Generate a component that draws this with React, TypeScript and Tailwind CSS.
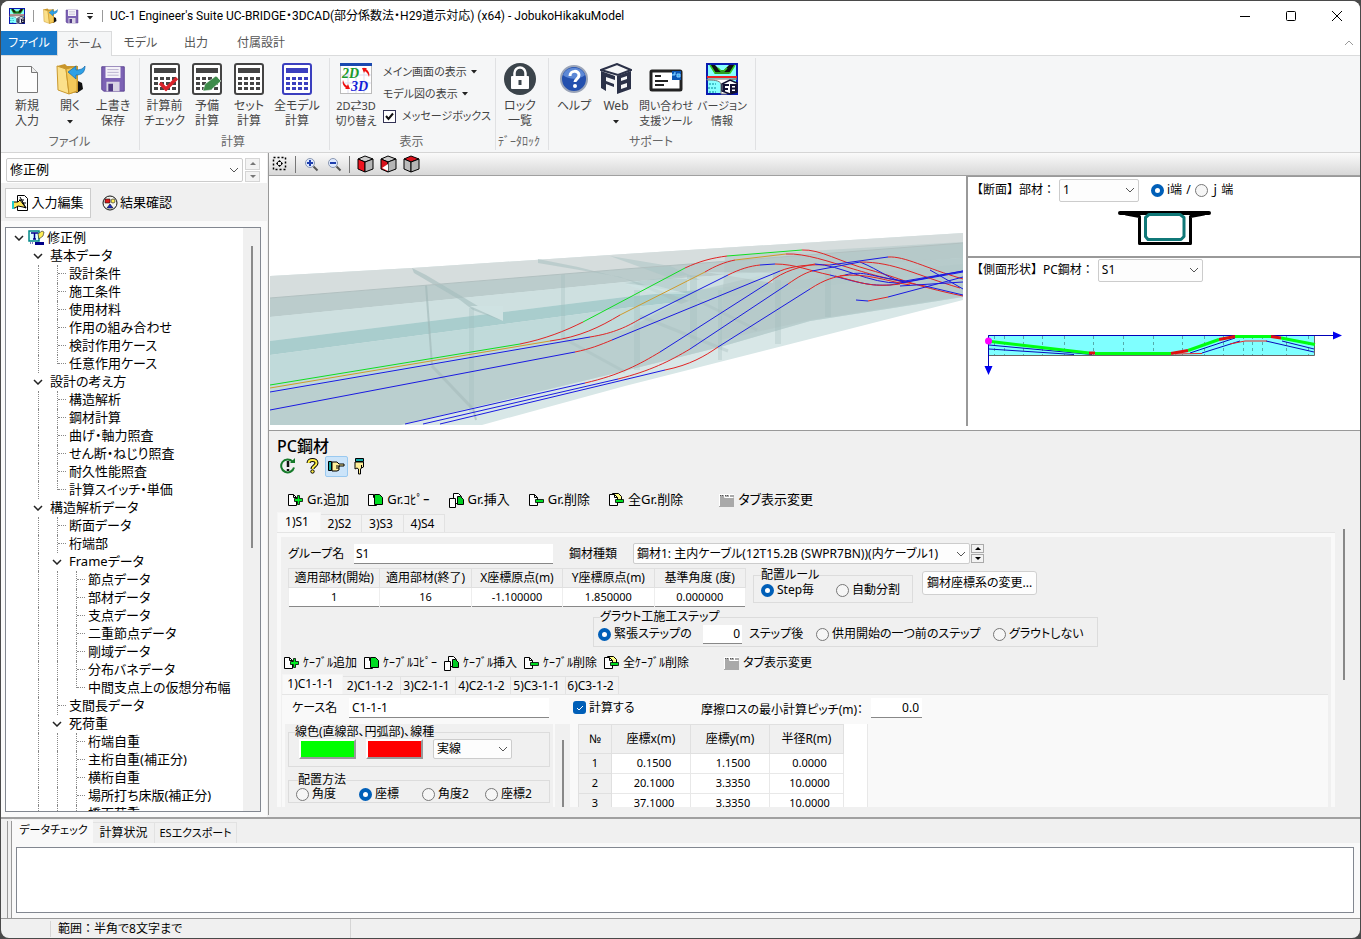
import React from 'react';
import clsx from 'clsx';

type Node = { label: string; depth: number; open?: boolean; last?: boolean };

const tree: Node[] = [
  { label: '基本データ', depth: 1, open: true },
  { label: '設計条件', depth: 2 },
  { label: '施工条件', depth: 2 },
  { label: '使用材料', depth: 2 },
  { label: '作用の組み合わせ', depth: 2 },
  { label: '検討作用ケース', depth: 2 },
  { label: '任意作用ケース', depth: 2, last: true },
  { label: '設計の考え方', depth: 1, open: true },
  { label: '構造解析', depth: 2 },
  { label: '鋼材計算', depth: 2 },
  { label: '曲げ・軸力照査', depth: 2 },
  { label: 'せん断・ねじり照査', depth: 2 },
  { label: '耐久性能照査', depth: 2 },
  { label: '計算スイッチ・単価', depth: 2, last: true },
  { label: '構造解析データ', depth: 1, open: true },
  { label: '断面データ', depth: 2 },
  { label: '桁端部', depth: 2 },
  { label: 'Frameデータ', depth: 2, open: true },
  { label: '節点データ', depth: 3 },
  { label: '部材データ', depth: 3 },
  { label: '支点データ', depth: 3 },
  { label: '二重節点データ', depth: 3 },
  { label: '剛域データ', depth: 3 },
  { label: '分布バネデータ', depth: 3 },
  { label: '中間支点上の仮想分布幅', depth: 3, last: true },
  { label: '支間長データ', depth: 2 },
  { label: '死荷重', depth: 2, open: true },
  { label: '桁端自重', depth: 3 },
  { label: '主桁自重(補正分)', depth: 3 },
  { label: '横桁自重', depth: 3 },
  { label: '場所打ち床版(補正分)', depth: 3 },
  { label: '橋面荷重', depth: 3 },
];

const Chevron = ({ className }: { className?: string }) => (
  <svg width="10" height="6" viewBox="0 0 10 6" fill="none" stroke="currentColor" className={className}>
    <path d="M1 1l4 4 4-4" />
  </svg>
);

const Caret = () => (
  <svg width="6" height="4" viewBox="0 0 6 4" className="inline-block">
    <path d="M0 0h6L3 3.5z" fill="#222" />
  </svg>
);

/* ---------- icons ---------- */

const AppIcon = ({ size }: { size: number }) => (
  <svg width={size} height={size} viewBox="0 0 32 32">
    <rect x="1" y="1" width="30" height="30" fill="#8ff" stroke="#0a1ab0" strokeWidth="2" />
    <path d="M4 2h5l5 5h4l5-5h6l-6 9H9z" fill="#111" />
    <path d="M4 2l5 8h15l5-8M12 5l3 3h3l3-3" fill="none" stroke="#3c2" strokeWidth="1.500" />
    <path d="M1 14h30" stroke="#e22" strokeWidth="2" />
    <path d="M1 16h30c-5 0-9 1-10 5v10h-6V21c-1-4-9-4-14-4z" fill="#fff" stroke="#777" />
    <path d="M3 21h7M2 25h8M3 29h7" stroke="#089" strokeDasharray="2 1" />
    <path d="M16 21l8-4 7 3v9l-7 2-8-3z" fill="#fff" stroke="#113" strokeWidth="1.500" />
    <path d="M18 29v-7h5M18 26h4M25 22h5v7h-5zM25 25.500h5" stroke="#113" strokeWidth="2" fill="none" />
  </svg>
);

const FolderIcon = ({ size }: { size: number }) => (
  <svg width={size} height={size} viewBox="0 0 32 32">
    <path d="M20 16l8 4 1 6-6 4-4-2z" fill="#111" />
    <path d="M3 3l8-2 2 2h11v26l-9 2z" fill="#c9962c" />
    <path d="M3 3l9 3 3 25-11-4z" fill="#fbe08a" stroke="#c9982e" />
    <path d="M12 6l11-3v25l-8 3z" fill="#f3c95a" stroke="#c9982e" />
    <path d="M31 3c0 7-4 9-9 9v4l-8-7 8-6v4c4 0 7-1 9-4z" fill="#2da0e6" stroke="#1668a8" strokeWidth=".7" />
  </svg>
);

const SaveIcon = ({ size }: { size: number }) => (
  <svg width={size} height={size} viewBox="0 0 32 32">
    <path d="M4 4h24v26H6l-2-2z" fill="#7c62b4" stroke="#5c4391" />
    <path d="M8 4h16v12H8z" fill="#f4f2f8" />
    <path d="M10 7h12M10 10h12M10 13h12" stroke="#b9b0ce" />
    <path d="M9 20h14v10H9z" fill="#d9d4e4" />
    <path d="M11 22h5v8h-5z" fill="#513b85" />
  </svg>
);

const NewIcon = () => (
  <svg width="32" height="32" viewBox="0 0 32 32">
    <path d="M6.500 3.500h14l6 6v20h-20z" fill="#fdfdfd" stroke="#777" />
    <path d="M20.500 3.500v6h6" fill="#eee" stroke="#777" />
  </svg>
);

const CalcIcon = ({ color, mark }: { color: string; mark?: 'check' | 'pen' }) => (
  <svg width="32" height="32" viewBox="0 0 32 32">
    <rect x="2" y="1" width="28" height="30" rx="2" fill="#fff" stroke={color} strokeWidth="2" />
    <path d="M5 5h22v5H5z" fill={color} />
    {[13, 18, 23].map((y) =>
      [5, 11, 17, 23].map((x) => <rect key={`${x}-${y}`} x={x} y={y + 1} width="4" height="3" fill={color} />),
    )}
    {mark === 'check' && <path d="M11 20l6 6 11-11" fill="none" stroke="#d9222a" strokeWidth="3.500" />}
    {mark === 'pen' && <path d="M12 28l2-7 11-8 5 5-10 9z" fill="#3d8b4a" stroke="#fff" strokeWidth=".5" />}
  </svg>
);

const SwitchIcon = () => (
  <svg width="32" height="32" viewBox="0 0 32 32">
    <rect x=".5" y=".5" width="31" height="30" fill="#fff" stroke="#bbb" />
    <path d="M8 4v26M16 4v26M24 4v26M1 12h30M1 20h30" stroke="#dde" />
    <path d="M0 0h32v3H0z" fill="#1a49b0" />
    <text x="2" y="15" fontSize="14" fontWeight="bold" fontStyle="italic" fontFamily="Liberation Serif, serif" fill="#1b9a2c">2D</text>
    <text x="11" y="28" fontSize="14" fontWeight="bold" fontStyle="italic" fontFamily="Liberation Serif, serif" fill="#1420d8">3D</text>
    <path d="M29 14c-1-4-3-5-4-6l-1 2-2-5 5 0-1 1c3 2 4 5 3 8zM3 17c1 4 3 5 4 6l1-2 2 5h-5l1-1c-3-2-4-5-3-8z" fill="#e11" />
  </svg>
);

const LockIcon = () => (
  <svg width="32" height="32" viewBox="0 0 32 32">
    <circle cx="16" cy="16" r="16" fill="#3b444b" />
    <path d="M10.500 14v-4a5.500 5.500 0 0111 0v4" fill="none" stroke="#fff" strokeWidth="2.500" />
    <rect x="7" y="13" width="18" height="13" rx="1" fill="#fff" />
    <path d="M14.500 17h3v5h-3z" fill="#3b444b" />
  </svg>
);

const HelpIcon = () => (
  <svg width="32" height="32" viewBox="0 0 32 32">
    <circle cx="16" cy="16" r="13" fill="#2450ae" stroke="#9aa4b8" strokeWidth="2" />
    <path d="M5 12a12 12 0 0122 0c-6 5-16 5-22 0z" fill="#5d88d6" />
    <path d="M12 13c0-6 9-6 9-1 0 4-4 4-4 7" fill="none" stroke="#fff" strokeWidth="3" />
    <circle cx="17" cy="23" r="2" fill="#fff" />
  </svg>
);

const WebIcon = () => (
  <svg width="32" height="32" viewBox="0 0 32 32">
    <path d="M1 7l16-6 14 6-13 5z" fill="none" stroke="#2b3148" strokeWidth="2" />
    <path d="M1 8l14 5v4l-9-3v4l8 3v3l-8-3v7l-5-3z" fill="#2b3148" />
    <path d="M17 13l14-5v18l-14 5zM21 15v3l6-2v-3zM21 22v4l6-2v-4z" fill="#2b3148" fillRule="evenodd" />
  </svg>
);

const ContactIcon = () => (
  <svg width="34" height="32" viewBox="0 0 34 32">
    <rect x="2" y="8" width="30" height="19" rx="1" fill="#fff" stroke="#222" strokeWidth="3" />
    <path d="M6 13h6M6 18h13M6 22h9" stroke="#222" strokeWidth="2" />
    <path d="M23 8h9v9h-9z" fill="#0a56b4" />
    <path d="M26 9v3h-3M28 11h3v3h-3z" stroke="#8cf" fill="#3ae" />
  </svg>
);

type PageKind = 'add' | 'copy' | 'insert' | 'remove' | 'removeAll';

const PageIcon = ({ kind }: { kind: PageKind }) => (
  <svg width="15" height="15" viewBox="0 0 15 15" stroke="#000" className="shrink-0">
    {kind === 'insert' ? (
      <>
        <path d="M4.500.5h5l3 3v7h-8z" fill="#fff" />
        <path d="M8.500 3.500h3l3 3v5h-6z" fill="#0c2" />
        <path d="M.5 5.500h6v9h-6z" fill="#fff" />
      </>
    ) : (
      <>
        {kind === 'removeAll' && <path d="M3.500.5h6l3 3v6h-9z" fill="#ff8" />}
        <path d="M.5 1.500h5l3 3v8h-8z" fill="#fff" />
        <path d="M5.500 1.500v3h3" fill="none" />
        {kind === 'add' && <path d="M9.500 2.500h2v3h3v3h-3v3h-2v-3h-3v-3h3z" fill="#0e2" strokeWidth=".8" />}
        {kind === 'copy' && <path d="M6.500 1.500h5l3 3v7h-8z" fill="#0d2" />}
        {(kind === 'remove' || kind === 'removeAll') && (
          <path d="M6.500 6.500h8v3h-8z" fill="#0d2" strokeWidth=".8" />
        )}
      </>
    )}
  </svg>
);

const TabIcon = () => (
  <svg width="15" height="14" viewBox="0 0 15 14" className="shrink-0">
    <path d="M0 1h15v13H0z" fill="#a9a9a9" />
    <path d="M0 1.500h15M.5 1v12M5.500 1v3.500h9M10.500 1v3" stroke="#fff" fill="none" />
    <path d="M1 2.500h4M6 2.500h4" stroke="#555" strokeDasharray="1 1" />
  </svg>
);

const CubeIcon = ({ face }: { face: 'front' | 'side' | 'top' }) => (
  <svg width="17" height="18" viewBox="0 0 17 18" stroke="#000" strokeLinejoin="round">
    <path d="M1 4l7-3 8 3-8 3z" fill={face === 'top' ? '#d8121c' : '#ccc'} />
    <path d="M1 4l7 3v10l-7-3z" fill={face === 'front' ? '#f01420' : face === 'side' ? '#d8121c' : '#bbb'} />
    <path d="M8 7l8-3v10l-8 3z" fill="#b5b5b5" />
    {face === 'side' && <path d="M2 13l6-4v7z" fill="#fff" stroke="none" />}
  </svg>
);

const ZoomIcon = ({ plus }: { plus?: boolean }) => (
  <svg width="15" height="15" viewBox="0 0 15 15" fill="none">
    <circle cx="6" cy="6" r="4.500" fill="#dfeaff" stroke="#8a97b0" />
    <path d="M9.500 9.500l4 4" stroke="#555" strokeWidth="2" />
    <path d={plus ? 'M3 6h6M6 3v6' : 'M3 6h6'} stroke="#1f3fae" strokeWidth="2" />
  </svg>
);

const EditIcon = () => (
  <svg width="17" height="16" viewBox="0 0 17 16" stroke="#000">
    <path d="M5.500.5h7l3 3v12h-10z" fill="#fff" />
    <path d="M1 7h5l2-2 6 8-3-1-5-1-3 2H1z" fill="#ffe75a" />
    <path d="M0 6h2v8H0z" fill="#2cc" stroke="none" />
    <path d="M8 2l6 11M7 5h5M10 8h4" fill="none" />
  </svg>
);

const ResultIcon = () => (
  <svg width="16" height="16" viewBox="0 0 16 16">
    <circle cx="8" cy="8" r="7" fill="#f4f4ee" stroke="#111" />
    <path d="M3 4h5v4H3z" fill="#e01818" stroke="#111" strokeWidth=".6" />
    <circle cx="11" cy="6" r="2" fill="#fe5" stroke="#111" strokeWidth=".6" />
    <path d="M5 13l3-4 3 4z" fill="#1a2bd0" stroke="#111" strokeWidth=".6" />
  </svg>
);

/* ---------- small controls ---------- */

const Select = ({ value, label, className }: { value: string; label: string; className?: string }) => (
  <span className={clsx('relative block', className)}>
    <select
      aria-label={label}
      className="block h-full w-full appearance-none rounded-[2px] border border-[#ccc] bg-[#fdfdfd] pr-5 pl-[3px] text-black outline-none"
    >
      <option>{value}</option>
    </select>
    <Chevron className="pointer-events-none absolute top-1/2 right-[4px] -translate-y-1/2 text-[#555]" />
  </span>
);

const Spinner = ({ muted }: { muted?: boolean }) => (
  <span className={clsx('flex h-full flex-col gap-px', muted ? 'w-[15px] text-[#777]' : 'w-[13px] text-black')}>
    {['M0 3h6L3 0z', 'M0 0h6L3 3z'].map((d, i) => (
      <button
        key={d}
        aria-label={i ? '下' : '上'}
        className={clsx(
          'flex flex-1 items-center justify-center border bg-[#f3f3f3]',
          muted ? 'border-[#d5d5d5]' : 'border-[#aaa]',
        )}
      >
        <svg width="6" height="3" viewBox="0 0 6 3">
          <path d={d} fill="currentColor" />
        </svg>
      </button>
    ))}
  </span>
);

const Radio = ({ name, label, checked, className }: { name: string; label: string; checked?: boolean; className?: string }) => (
  <label className={clsx('flex items-center gap-[3px] whitespace-nowrap', className)}>
    <input
      type="radio"
      name={name}
      defaultChecked={checked}
      className="size-[13px] shrink-0 appearance-none rounded-full border border-[#777] bg-[#f6f6f6] checked:border-4 checked:border-[#005fb8] checked:bg-white"
    />
    {label}
  </label>
);

const RibbonGroup = ({ title, className, children }: { title: string; className?: string; children: React.ReactNode }) => (
  <div className={clsx('my-[2px] flex flex-col border-r border-[#e0e1e3]', className)}>
    <div className="flex flex-1 pt-[5px]">{children}</div>
    <div className="h-[20px] pr-[6px] text-center leading-[24px] whitespace-nowrap text-[#666]">{title}</div>
  </div>
);

const RibbonButton = ({ icon, lines, className, drop }: { icon: React.ReactNode; lines: string[]; className?: string; drop?: boolean }) => (
  <button className={clsx('flex shrink-0 flex-col items-center whitespace-nowrap', className)}>
    <span className="mb-[3px] block h-[32px]">{icon}</span>
    {lines.map((line) => (
      <span key={line} className="block leading-[15px]">{line}</span>
    ))}
    {drop && <span className="block leading-[15px]"><Caret /></span>}
  </button>
);

const ToolButton = ({ kind, label, className }: { kind?: PageKind; label: string; className?: string }) => (
  <button className={clsx('flex shrink-0 items-center gap-[4px] whitespace-nowrap', className)}>
    {kind ? <PageIcon kind={kind} /> : <TabIcon />}
    {label}
  </button>
);

const Tabs = ({ items, widths }: { items: string[]; widths: string[] }) => (
  <div role="tablist" className="flex shrink-0 items-end">
    {items.map((item, i) => (
      <button
        key={item}
        role="tab"
        aria-selected={i === 0}
        className={clsx(
          'shrink-0 border border-b-0 whitespace-nowrap',
          widths[i],
          i === 0
            ? 'h-[20px] border-[#f5f5f5] bg-[#f9f9f9] pr-[4px] pb-[3px]'
            : 'h-[18px] border-l-0 border-[#e2e2e2] bg-[#f2f2f2] pr-[3px]',
        )}
      >
        {item}
      </button>
    ))}
  </div>
);

/* ---------- panes ---------- */

const TitleBar = () => (
  <header className="flex h-[30px] shrink-0 items-center bg-white pl-[8px] font-[Roboto,'Noto_Sans_CJK_JP',sans-serif]">
    <AppIcon size={16} />
    <span className="mx-[8px] h-[12px] w-px bg-[#999]" />
    <button aria-label="開く"><FolderIcon size={16} /></button>
    <button aria-label="保存" className="ml-[6px]"><SaveIcon size={16} /></button>
    <button aria-label="カスタマイズ" className="ml-[5px] flex w-[10px] flex-col items-center gap-[2px]">
      <span className="h-px w-[6px] bg-[#222]" />
      <Caret />
    </button>
    <span className="mx-[7px] h-[12px] w-px bg-[#999]" />
    <h1 className="flex-1 truncate">UC-1 Engineer's Suite UC-BRIDGE・3DCAD(部分係数法・H29道示対応) (x64) - JobukoHikakuModel</h1>
    <button aria-label="最小化" className="flex w-[46px] justify-center">
      <svg width="11" height="11"><path d="M0 5.500h10" stroke="#000" /></svg>
    </button>
    <button aria-label="最大化" className="flex w-[46px] justify-center">
      <svg width="11" height="11"><rect x=".5" y=".5" width="9" height="9" rx="1" fill="none" stroke="#000" /></svg>
    </button>
    <button aria-label="閉じる" className="flex w-[46px] justify-center">
      <svg width="11" height="11"><path d="M0 0l10 10M10 0L0 10" stroke="#000" /></svg>
    </button>
  </header>
);

const Ribbon = () => (
  <>
    <nav className="flex h-[25px] shrink-0 border-b border-[#dadbdc] bg-white text-[#555]">
      <button className="w-[56px] bg-[#1979ca] text-white">ファイル</button>
      <button className="-mb-px w-[55px] border border-b-0 border-[#dadbdc] bg-[#f5f6f7]">ホーム</button>
      <button className="w-[57px]">モデル</button>
      <button className="w-[54px]">出力</button>
      <button className="w-[76px]">付属設計</button>
      <button aria-label="リボンを折りたたむ" className="mr-[6px] ml-auto text-[#999]">
        <Chevron className="rotate-180" />
      </button>
    </nav>
    <div className="flex h-[97px] shrink-0 border-b border-[#d5d5d5] bg-[#f5f6f7] text-[#444]">
      <RibbonGroup title="ファイル" className="w-[139px] pl-[5px]">
        <RibbonButton className="w-[42px]" icon={<NewIcon />} lines={['新規', '入力']} />
        <RibbonButton className="w-[44px]" icon={<FolderIcon size={32} />} lines={['開く']} drop />
        <RibbonButton className="w-[42px]" icon={<SaveIcon size={30} />} lines={['上書き', '保存']} />
      </RibbonGroup>
      <RibbonGroup title="計算" className="w-[190px] pl-[3px]">
        <RibbonButton className="w-[43px]" icon={<CalcIcon color="#444" mark="check" />} lines={['計算前', 'チェック']} />
        <RibbonButton className="w-[42px]" icon={<CalcIcon color="#444" mark="pen" />} lines={['予備', '計算']} />
        <RibbonButton className="w-[42px]" icon={<CalcIcon color="#444" />} lines={['セット', '計算']} />
        <RibbonButton className="w-[54px]" icon={<CalcIcon color="#3b3fbf" />} lines={['全モデル', '計算']} />
      </RibbonGroup>
      <RibbonGroup title="表示" className="w-[166px] pl-[4px]">
        <RibbonButton className="w-[44px] text-[11px]" icon={<SwitchIcon />} lines={['2D⇄3D', '切り替え']} />
        <div className="flex flex-col pl-[5px] text-[11px] whitespace-nowrap">
          <button className="flex h-[18px] items-center gap-[4px]">メイン画面の表示<Caret /></button>
          <button className="mt-[4px] flex h-[18px] items-center gap-[4px]">モデル図の表示<Caret /></button>
          <label className="mt-[4px] flex h-[18px] items-center gap-[6px]">
            <span className="relative block size-[13px]">
              <input type="checkbox" defaultChecked className="block size-[13px] appearance-none border border-[#335] bg-white" />
              <svg width="9" height="9" viewBox="0 0 9 9" className="pointer-events-none absolute top-[2px] left-[2px]">
                <path d="M1 4l2.500 3L8 1.500" fill="none" stroke="#111" strokeWidth="2" />
              </svg>
            </span>
            メッセージボックス
          </label>
        </div>
      </RibbonGroup>
      <RibbonGroup title="ﾃﾞｰﾀﾛｯｸ" className="w-[53px]">
        <RibbonButton className="w-[48px]" icon={<LockIcon />} lines={['ロック', '一覧']} />
      </RibbonGroup>
      <RibbonGroup title="サポート" className="w-[207px] pl-[4px]">
        <RibbonButton className="w-[42px]" icon={<HelpIcon />} lines={['ヘルプ']} />
        <RibbonButton className="w-[42px]" icon={<WebIcon />} lines={['Web']} drop />
        <RibbonButton className="w-[58px] text-[11px]" icon={<ContactIcon />} lines={['問い合わせ', '支援ツール']} />
        <RibbonButton className="w-[54px] text-[11px]" icon={<AppIcon size={32} />} lines={['バージョン', '情報']} />
      </RibbonGroup>
    </div>
  </>
);

const TreeRow = ({ node }: { node: Node }) => (
  <li className="flex h-[18px] shrink-0 items-center pl-[3px] whitespace-nowrap">
    <span className="w-[19px]" />
    {Array.from({ length: node.depth }, (_, i) => {
      const own = i === node.depth - 1;
      if (own && node.open) {
        return (
          <span key={i} className="flex w-[19px] justify-center text-[#222]">
            <Chevron className="stroke-[1.5px]" />
          </span>
        );
      }
      return (
        <span key={i} className="flex h-full w-[19px] pl-[10px]">
          <span className={clsx('w-px border-l border-dotted border-[#888]', own && node.last ? 'h-[9px]' : 'h-full')} />
          {own && <span className="h-[9px] flex-1 border-b border-dotted border-[#888]" />}
        </span>
      );
    })}
    <span className="pl-[3px]">{node.label}</span>
  </li>
);

const Sidebar = () => (
  <aside className="flex w-[266px] shrink-0 flex-col bg-[#fafafa] text-[13px]">
    <div className="flex h-[30px] items-end gap-[2px] bg-white pb-px pl-[5px]">
      <Select label="データ" value="修正例" className="h-[24px] w-[237px]" />
      <span className="h-[24px]"><Spinner muted /></span>
    </div>
    <div className="flex h-[38px] items-center gap-[6px] bg-[#f0f0f0] pt-px pl-[4px]">
      <button className="flex h-[30px] w-[86px] items-center justify-center gap-[2px] border border-[#ccc] bg-white">
        <EditIcon />入力編集
      </button>
      <button className="flex h-[30px] items-center gap-[2px] px-[5px]">
        <ResultIcon />結果確認
      </button>
    </div>
    <div className="mt-[6px] mr-[6px] mb-[5px] ml-[4px] flex min-h-0 flex-1 overflow-hidden border border-[#828790] bg-white">
      <ul className="flex min-w-0 flex-1 flex-col overflow-hidden pt-px">
        <li className="flex h-[18px] shrink-0 items-center pl-[3px]">
          <span className="flex w-[19px] justify-center text-[#222]"><Chevron className="stroke-[1.5px]" /></span>
          <svg width="17" height="16" viewBox="0 0 17 16">
            <path d="M1 1h10v10H1z" fill="#dff" stroke="#088" strokeWidth="1.500" />
            <path d="M3 3h7M6.500 3v6M5 9h3" stroke="#008" strokeWidth="1.500" />
            <path d="M10 4l4-3 2 1-1 4-4 3z" fill="#fe5" stroke="#222" strokeWidth=".6" />
            <path d="M7 12h9v3H7z" fill="#008" />
            <path d="M2 13h4" stroke="#008" strokeDasharray="1 1" />
          </svg>
          <span className="pl-[2px]">修正例</span>
        </li>
        {tree.map((node) => <TreeRow key={node.label} node={node} />)}
      </ul>
      <div className="flex w-[17px] justify-center bg-[#f0f0f0]">
        <div className="mt-[18px] h-[302px] w-[2px] bg-[#8a8a8a]" />
      </div>
    </div>
  </aside>
);

const BLUE = '#1a1ae0';
const RED = '#e02424';
const GREEN = '#10dd20';
const GOLD = '#cf9a2a';

// tendon pieces in the 3D view
const tendons: [string, string][] = [
  [GREEN, 'M270 385L520 344M583 322L685 268M727 256L802 250'],
  [RED, 'M520 344C545 339 565 331 583 322M685 268C700 261 712 258 727 256M802 250C820 249 840 262 870 270S910 285 963 296'],
  [GOLD, 'M270 388L550 341M620 315L705 272M735 260L786 254'],
  [RED, 'M550 341C580 337 600 327 620 315M705 272C715 266 725 262 735 260M786 254C805 253 830 262 850 268S890 280 925 286'],
  [BLUE, 'M270 392L590 337M640 319L728 275M760 265L775 264M830 275C860 283 870 286 890 285L963 272'],
  [RED, 'M590 337C615 333 628 326 640 319M728 275C740 269 750 266 760 265M775 264C795 264 810 271 830 275'],
  [BLUE, 'M270 410L575 352M612 340L780 271M830 265L888 257'],
  [RED, 'M575 352C590 349 600 345 612 340M780 271C792 266 810 264 830 265M888 257C905 256 925 268 963 279'],
  [BLUE, 'M405 424L585 383M660 352L768 283M815 264C840 265 870 284 900 283L963 271'],
  [RED, 'M585 383C620 375 640 364 660 352M768 283C785 270 800 267 815 264'],
  [BLUE, 'M423 424L618 379M690 349L788 284M812 271L860 262M860 262C880 270 890 280 905 282'],
  [RED, 'M618 379C650 371 670 361 690 349M788 284C798 277 805 273 812 271M860 262C895 262 915 275 960 288'],
  [BLUE, 'M440 424L665 370M718 347L810 289M845 275C865 270 870 277 905 281L963 271'],
  [RED, 'M665 370C690 365 705 356 718 347M810 289C825 279 835 277 845 275M840 276C865 272 890 282 910 285'],
  [BLUE, 'M856 300L868 301M888 297L963 277M900 286L963 282M925 286L963 295M930 270L963 289'],
  [RED, 'M868 301L888 297M835 276C860 282 870 288 900 284'],
];

const ModelView = () => (
  <svg viewBox="270 176 693 249" preserveAspectRatio="xMinYMin slice" className="h-[249px] w-full bg-white">
    <path d="M270 276L412 268 625 254 963 233V300L625 386 482 425H270z" fill="#d8e7e7" />
    <path d="M270 276L412 268 625 254 963 233V243L625 269 270 298z" fill="#d6dddd" />
    <path d="M270 298L625 269 963 243V258L625 282 270 317z" fill="#bbcccc" />
    <path d="M270 317L625 282 963 258V272L625 297 270 341z" fill="#cee0e0" />
    <path d="M270 341L625 297 963 264V271L625 308 270 355z" fill="#a9cdcd" />
    <path d="M270 355L625 308 963 271V297L810 321 720 347 620 372 400 425H270z" fill="#c0dada" />
    <path d="M270 393L520 350 625 330 700 290 800 266 963 258V297L810 321 720 347 620 372 400 425H270z" fill="#b8cccc" opacity=".85" />
    <path d="M725 256L963 242V296L810 320 720 340z" fill="#b2c6c6" opacity=".55" />
    <path d="M412 268l14 7 77 46-30-11-13-10-46-27z" fill="#a3bcbc" opacity=".6" />
    <path d="M470 306h33v15z" fill="#cfe2e2" />
    <path d="M538 259l40 8 56 14 55 20-8 3-60-27-83-14z" fill="#a8bfbf" opacity=".55" />
    <path d="M610 256l60 10 30 14-30-2zM625 283l62 10v-18z" fill="#a8c4c4" opacity=".5" />
    <path d="M625 284l28 10 35 0-30-8zM705 272l68 11v-10z" fill="#cfe4e4" opacity=".6" />
    <path d="M426 285l6 80M473 408l3 12" fill="none" stroke="#9fb6b6" strokeWidth="2" opacity=".6" />
    <path d="M432 366l40 42" stroke="#a3b9b9" strokeWidth="3" opacity=".5" />
    <path d="M469 308h5v104h-5zM561 274h4v64h-4zM634 290h6v80h-6zM690 275h7v72h-7zM718 290h4v70h-4zM775 280h6v64h-6zM825 270h6v47h-6z" fill="#9fb9b9" opacity=".28" />
    <path d="M563 338l62 34M640 316l88 35M697 300l60 30" stroke="#a5bcbc" strokeWidth="3" opacity=".35" />
    <path d="M270 298L625 269 963 243" fill="none" stroke="#b2c0c0" />
    {tendons.map(([color, d]) => (
      <path key={d} d={d} fill="none" stroke={color} strokeWidth="1" />
    ))}
  </svg>
);

const SectionView = () => (
  <svg width="96" height="38" viewBox="1116 208 96 38" fill="none" strokeLinejoin="round" strokeLinecap="round">
    <path d="M1120 213h89" stroke="#000" strokeWidth="4" />
    <path d="M1126 214l13.500 2.500v27h51v-27l13.500-2.500" stroke="#000" strokeWidth="3" />
    <path d="M1149 214.500h31l4 3v19l-3 3h-33l-2.500-3v-19z" stroke="#107878" strokeWidth="3" />
  </svg>
);

const ProfileView = () => (
  <svg width="360" height="48" viewBox="984 330 360 48" fill="none">
    <path d="M988.500 335.500h326v20h-326z" fill="#7fffff" stroke="#666" />
    <path
      d="M994.500 336v19M1004.500 336v19M1023.500 336v19M1042.500 336v19M1064.500 336v19M1093.500 336v19M1123.500 336v19M1153.500 336v19M1182.500 336v19M1204.500 336v19M1223.500 336v19M1243.500 336v19M1252.500 336v19M1262.500 336v19M1286.500 336v19M1308.500 336v19"
      stroke="#5aa"
      strokeDasharray="3 3"
    />
    <path d="M989 345l103 9.500M989 349l85 5.500M1190 353l45-15M1202 353l38-12M1266 341l48 11M1282 341l32 8" stroke="#0a0ab8" />
    <path d="M1175 354l27-.5M1230 344l15-3h22" stroke="#e22" />
    <path d="M988.500 370v-34.500H1335" stroke="#0000b8" />
    <path d="M1333 331.500v8l9-4zM984.500 366h8l-4 9z" fill="#00e" />
    <path d="M991 341.500l98 11.500M1095 353.500h76M1188 350.500l31-11M1235 336.500h36M1281 338l34 6.500" stroke="#0f1" strokeWidth="3" />
    <path d="M1089 353h6M1171 353.500l17-3M1219 339.500l16-3M1271 336.500l10 1.500" stroke="#e01010" strokeWidth="3" />
    <circle cx="988.500" cy="341" r="3.500" fill="#f0f" />
  </svg>
);

const ViewPane = () => (
  <div className="flex h-[254px] shrink-0 bg-white">
    <div className="min-w-0 flex-1 pr-[3px] pl-px">
      <ModelView />
    </div>
    <div className="flex w-[394px] shrink-0 flex-col pb-[4px] text-[12px]">
      <section className="h-[80px] border-t border-l-2 border-[#999] pt-px pl-[3px]">
        <div className="flex h-[24px] items-center">
          <span className="[font-feature-settings:normal]">【断面】部材：</span>
          <Select label="部材" value="1" className="ml-[4px] h-[23px] w-[80px]" />
          <Radio name="end" label="i端" checked className="ml-[12px]" />
          <span className="mx-[4px]">/</span>
          <Radio name="end" label="ｊ 端" />
        </div>
        <div className="flex justify-center pt-[6px] pr-[3px]"><SectionView /></div>
      </section>
      <section className="flex-1 border-t-2 border-l-2 border-[#999] pl-[3px]">
        <div className="flex h-[24px] items-center">
          <span className="[font-feature-settings:normal]">【側面形状】PC鋼材：</span>
          <Select label="PC鋼材" value="S1" className="ml-[4px] h-[23px] w-[105px]" />
        </div>
        <div className="pt-[48px] pl-[13px]"><ProfileView /></div>
      </section>
    </div>
  </div>
);

const GroupTable = () => (
  <table className="h-[38px] w-[458px] table-fixed border-collapse border-b border-b-[#888] bg-white text-center">
    <thead>
      <tr className="h-[19px] bg-[#f0f0f0]">
        {['適用部材(開始)', '適用部材(終了)', 'X座標原点(m)', 'Y座標原点(m)', '基準角度 (度)'].map((h) => (
          <th key={h} className="border border-[#e0e0e0] p-0 font-normal whitespace-nowrap">{h}</th>
        ))}
      </tr>
    </thead>
    <tbody>
      <tr className="h-[19px] text-[11px]">
        {['1', '16', '-1.100000', '1.850000', '0.000000'].map((v) => (
          <td key={v} className="border-x border-[#eee] p-0">{v}</td>
        ))}
      </tr>
    </tbody>
  </table>
);

const points = [
  ['1', '0.1500', '1.1500', '0.0000'],
  ['2', '20.1000', '3.3350', '10.0000'],
  ['3', '37.1000', '3.3350', '10.0000'],
];

const PointTable = () => (
  <table className="w-[266px] table-fixed border-collapse text-center">
    <thead>
      <tr className="h-[29px] bg-[#f0f0f0]">
        <th className="w-[33px] border border-[#e0e0e0] p-0 font-normal">№</th>
        <th className="w-[79px] border border-[#e0e0e0] p-0 font-normal">座標x(m)</th>
        <th className="w-[79px] border border-[#e0e0e0] p-0 font-normal">座標y(m)</th>
        <th className="border border-[#e0e0e0] p-0 font-normal">半径R(m)</th>
      </tr>
    </thead>
    <tbody className="text-[11px]">
      {points.map(([no, ...values]) => (
        <tr key={no} className="h-[20px]">
          <td className="border border-[#e0e0e0] bg-[#f0f0f0] p-0">{no}</td>
          {values.map((v, i) => (
            <td key={i} className="border border-[#e8e8e8] p-0 pl-[6px]">{v}</td>
          ))}
        </tr>
      ))}
    </tbody>
  </table>
);

const CablePage = () => (
  <div className="min-h-0 flex-1 overflow-hidden border-t border-[#e5e5e5] bg-[#f9f9f9]">
    <div className="mb-[4px] flex h-[25px] items-center pl-[10px]">
      <label htmlFor="case" className="w-[57px]">ケース名</label>
      <input id="case" defaultValue="C1-1-1" className="h-[20px] w-[200px] border-b border-[#888] bg-white px-[3px] outline-none" />
      <label className="ml-[24px] flex w-[128px] items-center gap-[3px]">
        <span className="relative block size-[13px]">
          <input type="checkbox" defaultChecked className="block size-[13px] appearance-none rounded-[3px] bg-[#005fb8]" />
          <svg width="8" height="6" viewBox="0 0 8 6" className="pointer-events-none absolute top-[4px] left-[3px]">
            <path d="M1 3l2 2 4-4" fill="none" stroke="#fff" />
          </svg>
        </span>
        計算する
      </label>
      <label htmlFor="pitch" className="w-[170px] pt-[4px] whitespace-nowrap">摩擦ロスの最小計算ピッチ(m)：</label>
      <input id="pitch" defaultValue="0.0" className="h-[20px] w-[51px] border-b border-[#888] bg-white px-[3px] text-right outline-none" />
    </div>
    <div className="flex pl-[3px]">
      <div className="w-[268px] shrink-0 bg-[#f0f0f0] px-[3px] pt-px">
        <fieldset className="h-[42px] border border-[#dcdcdc] pl-[10px]">
          <legend className="-ml-[4px] leading-[14px]">線色(直線部、円弧部)、線種</legend>
          <div className="flex items-center gap-[10px]">
            <button aria-label="直線部の色" className="h-[20px] w-[57px] border-2 border-t-white border-r-[#999] border-b-[#999] border-l-white bg-[#0f0]" />
            <button aria-label="円弧部の色" className="h-[20px] w-[57px] border-2 border-t-white border-r-[#999] border-b-[#999] border-l-white bg-[#f00]" />
            <Select label="線種" value="実線" className="h-[20px] w-[79px]" />
          </div>
        </fieldset>
        <fieldset className="mt-[6px] h-[30px] border border-[#dcdcdc] pl-[7px]">
          <legend className="ml-[2px] leading-[14px]">配置方法</legend>
          <div className="flex h-[14px] items-center leading-[14px]">
            <Radio name="layout" label="角度" className="w-[63px]" />
            <Radio name="layout" label="座標" checked className="w-[63px]" />
            <Radio name="layout" label="角度2" className="w-[63px]" />
            <Radio name="layout" label="座標2" />
          </div>
        </fieldset>
      </div>
      <div className="ml-[2px] flex w-[15px] justify-center bg-[#f0f0f0]">
        <div className="mt-[16px] h-[90px] w-[2px] bg-[#888]" />
      </div>
      <div className="ml-[8px] w-[290px] border-r border-[#e8e8e8] bg-white"><PointTable /></div>
    </div>
  </div>
);

const FormPane = () => (
  <section className="flex min-h-0 flex-1 flex-col border-t border-[#999] bg-[#f0f0f0] pt-[6px] pb-[8px] pl-[8px] text-[12px]">
    <h2 className="text-[16px] leading-[18px] font-medium">PC鋼材</h2>
    <div className="flex h-[22px] items-center gap-[2px]">
      <button aria-label="更新" className="flex w-[22px] justify-center">
        <svg width="16" height="16" viewBox="0 0 16 16">
          <path d="M12.500 3.500a6.500 6.500 0 101.500 6" fill="none" stroke="#167a2a" strokeWidth="2" />
          <path d="M10 5h5V0z" fill="#167a2a" />
          <path d="M8 3v6M8 11v2" stroke="#111" strokeWidth="2.500" />
        </svg>
      </button>
      <button aria-label="ヘルプ" className="flex w-[22px] justify-center">
        <svg width="13" height="16" viewBox="0 0 13 16" fill="none">
          <path d="M2.500 5c0-4 8-4 8 0 0 3-4 3-4 6" stroke="#000" strokeWidth="4" />
          <path d="M2.500 5c0-4 8-4 8 0 0 3-4 3-4 6" stroke="#fe4" strokeWidth="2" />
          <circle cx="6.500" cy="13.500" r="1.700" fill="#fe4" stroke="#000" />
        </svg>
      </button>
      <button aria-label="右" className="flex h-[21px] w-[23px] items-center justify-center rounded-[2px] border border-[#99c9f0] bg-[#cce4f9]">
        <svg width="17" height="12" viewBox="0 0 17 12" stroke="#000">
          <path d="M.5 1.500h3v9h-3z" fill="#1aa" />
          <path d="M4 2h5l2 2h5v2h-5v4l-2 1H4z" fill="#fe9" />
          <path d="M8 6h4M8 8h3" />
        </svg>
      </button>
      <button aria-label="下" className="flex w-[18px] justify-center">
        <svg width="12" height="17" viewBox="0 0 12 17" stroke="#000">
          <path d="M2.500.5h8v3h-8z" fill="#1aa" />
          <path d="M2 4h8.500v5l-2 1V7v3l-1 1v5H5.500v-5L4 10l-2 1z" fill="#fe9" />
        </svg>
      </button>
    </div>
    <div className="mt-[13px] flex h-[20px] items-center gap-[19px] pl-[11px] text-[13px]">
      <ToolButton kind="add" label="Gr.追加" />
      <ToolButton kind="copy" label="Gr.ｺﾋﾟｰ" />
      <ToolButton kind="insert" label="Gr.挿入" />
      <ToolButton kind="remove" label="Gr.削除" />
      <ToolButton kind="removeAll" label="全Gr.削除" />
      <ToolButton label="タブ表示変更" className="ml-[17px]" />
    </div>
    <div className="mt-[2px] flex min-h-0 flex-1">
      <div className="flex min-w-0 flex-1 flex-col">
        <Tabs items={['1)S1', '2)S2', '3)S3', '4)S4']} widths={['w-[44px]', 'w-[41px]', 'w-[42px]', 'w-[41px]']} />
        <div className="flex min-h-0 flex-1 flex-col border-t border-[#e5e5e5] bg-[#f9f9f9] pt-[4px] pr-[4px] pl-[4px]">
          <div className="flex min-h-0 flex-1 flex-col bg-[#f0f0f0] pt-[6px]">
            <div className="flex h-[21px] shrink-0 items-center pl-[7px]">
              <label htmlFor="group" className="w-[66px]">グループ名</label>
              <input id="group" defaultValue="S1" className="h-[20px] w-[199px] border-b border-[#888] bg-white px-[2px] outline-none" />
              <span className="ml-[16px] w-[64px]">鋼材種類</span>
              <Select label="鋼材種類" value="鋼材1: 主内ケーブル(12T15.2B (SWPR7BN))(内ケーブル1)" className="h-[21px] w-[337px]" />
              <span className="ml-px h-[19px]"><Spinner /></span>
            </div>
            <div className="flex shrink-0 items-start pl-[7px]">
              <div className="pt-[4px]"><GroupTable /></div>
              <fieldset className="mt-[4px] ml-[7px] h-[35px] w-[160px] border border-[#dcdcdc] px-[7px]">
                <legend className="leading-[14px]">配置ルール</legend>
                <div className="flex h-[16px] items-center">
                  <Radio name="rule" label="Step毎" checked className="w-[75px]" />
                  <Radio name="rule" label="自動分割" />
                </div>
              </fieldset>
              <button className="mt-[7px] ml-[9px] h-[24px] w-[115px] rounded-[3px] border border-[#d0d0d0] bg-[#fdfdfd] whitespace-nowrap">鋼材座標系の変更...</button>
            </div>
            <fieldset className="mt-[3px] ml-[312px] h-[37px] w-[505px] shrink-0 border border-[#dcdcdc] pl-[4px]">
              <legend className="ml-[2px] leading-[14px]">グラウト工施工ステップ</legend>
              <div className="flex h-[20px] items-center whitespace-nowrap">
                <Radio name="grout" label="緊張ステップの" checked className="w-[105px]" />
                <input aria-label="ステップ数" defaultValue="0" className="h-[19px] w-[39px] border-b border-[#888] bg-white px-[2px] text-right outline-none" />
                <span className="ml-[7px] w-[67px]">ステップ後</span>
                <Radio name="grout" label="供用開始の一つ前のステップ" className="w-[177px]" />
                <Radio name="grout" label="グラウトしない" />
              </div>
            </fieldset>
            <div className="mt-[6px] flex h-[20px] shrink-0 items-center pl-[3px]">
              <ToolButton kind="add" label="ｹｰﾌﾞﾙ追加" className="w-[80px]" />
              <ToolButton kind="copy" label="ｹｰﾌﾞﾙｺﾋﾟｰ" className="w-[80px]" />
              <ToolButton kind="insert" label="ｹｰﾌﾞﾙ挿入" className="w-[80px]" />
              <ToolButton kind="remove" label="ｹｰﾌﾞﾙ削除" className="w-[80px]" />
              <ToolButton kind="removeAll" label="全ｹｰﾌﾞﾙ削除" className="w-[120px]" />
              <ToolButton label="タブ表示変更" />
            </div>
            <div className="mt-px flex min-h-0 flex-1 flex-col pr-[3px] pl-px">
              <Tabs
                items={['1)C1-1-1', '2)C1-1-2', '3)C2-1-1', '4)C2-1-2', '5)C3-1-1', '6)C3-1-2']}
                widths={['w-[61px]', 'w-[58px]', 'w-[55px]', 'w-[55px]', 'w-[55px]', 'w-[53px]']}
              />
              <CablePage />
            </div>
          </div>
        </div>
      </div>
      <div className="flex w-[25px] shrink-0 justify-center pr-[8px]">
        <div className="mt-[17px] h-[151px] w-[2px] bg-[#888]" />
      </div>
    </div>
  </section>
);

const ViewToolbar = () => (
  <div className="flex h-[23px] shrink-0 items-center border-b border-[#a0a0a0] bg-linear-to-b from-[#fafafa] to-[#d8d8d8] pl-[3px]">
    <button aria-label="全体表示">
      <svg width="16" height="16" viewBox="0 0 16 16">
        <rect x="1.500" y="1.500" width="12" height="12" fill="none" stroke="#000" strokeWidth="1.500" strokeDasharray="2 2" />
        <path d="M7.500 4l2 2h-4zM7.500 11l2-2h-4zM4 7.500l2-2v4zM11 7.500l-2-2v4z" fill="#000" />
      </svg>
    </button>
    <span className="mr-[8px] ml-[7px] h-[17px] w-px bg-[#777]" />
    <div className="flex gap-[8px]">
      <button aria-label="拡大"><ZoomIcon plus /></button>
      <button aria-label="縮小"><ZoomIcon /></button>
    </div>
    <span className="mx-[7px] h-[17px] w-px bg-[#777]" />
    <div className="flex gap-[6px]">
      <button aria-label="正面"><CubeIcon face="front" /></button>
      <button aria-label="側面"><CubeIcon face="side" /></button>
      <button aria-label="上面"><CubeIcon face="top" /></button>
    </div>
  </div>
);

const MessagePane = () => (
  <section className="flex h-[101px] shrink-0 border-t-2 border-[#a0a0a0] bg-[#f0f0f0] text-[12px]">
    <div className="mt-[2px] ml-[6px] w-[5px] border-x border-[#999]" />
    <div className="flex min-w-0 flex-1 flex-col bg-[#f9f9f9] pl-[2px]">
      <div className="bg-[#f0f0f0]">
        <div role="tablist" className="flex h-[24px] items-end">
          <button role="tab" className="h-[23px] w-[79px] bg-[#f9f9f9] pb-[2px] text-[11px]">データチェック</button>
          <button role="tab" className="h-[21px] w-[62px] border-t border-r border-[#e2e2e2]">計算状況</button>
          <button role="tab" className="h-[21px] w-[82px] border-t border-r border-[#e2e2e2] text-[11px]">ESエクスポート</button>
        </div>
      </div>
      <textarea aria-label="メッセージ" className="mx-[2px] mt-[4px] mr-[6px] mb-[5px] flex-1 resize-none border border-[#828790] bg-white outline-none" />
    </div>
  </section>
);

export default function App() {
  return (
    <div className="h-screen overflow-hidden bg-[#4a4a4a] p-px font-['Noto_Sans','Noto_Sans_CJK_JP',sans-serif] text-[12px] text-black [font-feature-settings:'palt']">
      <div className="flex h-full flex-col overflow-hidden rounded-lg bg-[#f0f0f0]">
        <TitleBar />
        <Ribbon />
        <main className="flex min-h-0 flex-1">
          <Sidebar />
          <div className="mb-[2px] ml-px flex min-w-0 flex-1 flex-col border-l border-[#999]">
            <ViewToolbar />
            <ViewPane />
            <FormPane />
          </div>
        </main>
        <MessagePane />
        <footer className="flex h-[20px] shrink-0 items-center border-t border-[#999] text-[12px]">
          <span className="h-[16px] w-[50px] border-r border-[#d5d5d5]" />
          <span className="h-full w-[300px] border-r border-[#d5d5d5] pl-[7px] leading-[20px]">
            範囲<span className="[font-feature-settings:normal]">：</span>半角で8文字まで
          </span>
        </footer>
      </div>
    </div>
  );
}
